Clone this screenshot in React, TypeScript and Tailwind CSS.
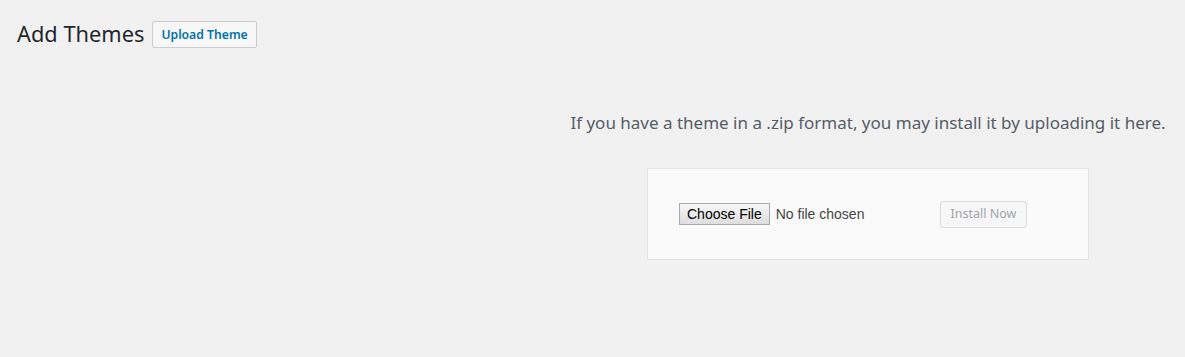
const App = () => {
  return (
    <div className="min-h-[357px] w-full bg-[#f1f1f1] font-['Noto_Sans',sans-serif] text-[#23282d]">
      {/* Header */}
      <div className="flex items-center gap-[8px] pl-[17px] pt-[20px]">
        <h1 className="text-[21.8px] leading-[28px] font-normal">Add Themes</h1>
        <button className="h-[27px] rounded-[2px] border border-[#cccccc] bg-[#f7f7f7] px-[8px] pt-[2px] text-[12.2px] font-semibold text-[#0073aa]">
          Upload Theme
        </button>
      </div>

      {/* Upload panel */}
      <div className="flex flex-col items-center pl-[551px] pt-[63px]">
        <p className="text-[17px] leading-[24px] text-[#555d66]">
          If you have a theme in a .zip format, you may install it by uploading it here.
        </p>
        <form className="mt-[33px] flex h-[92px] w-[442px] items-center border border-[#e5e5e5] bg-[#fafafa] pl-[31px]">
          <div className="flex w-[257px] items-center">
            <span className="flex h-[22px] items-center border border-[#a9a9a9] bg-[linear-gradient(#f6f6f6,#dedede)] px-[7px] font-['Liberation_Sans',sans-serif] text-[14px] text-black">
              Choose File
            </span>
            <span className="ml-[6px] font-['Liberation_Sans',sans-serif] text-[14px] text-[#444]">No file chosen</span>
          </div>
          <button
            type="button"
            disabled
            className="ml-[4px] h-[27px] w-[87px] rounded-[3px] border border-[#dddddd] bg-[#f7f7f7] text-[12.5px] text-[#a0a5aa]"
          >
            Install Now
          </button>
        </form>
      </div>
    </div>
  );
};

export default App;
